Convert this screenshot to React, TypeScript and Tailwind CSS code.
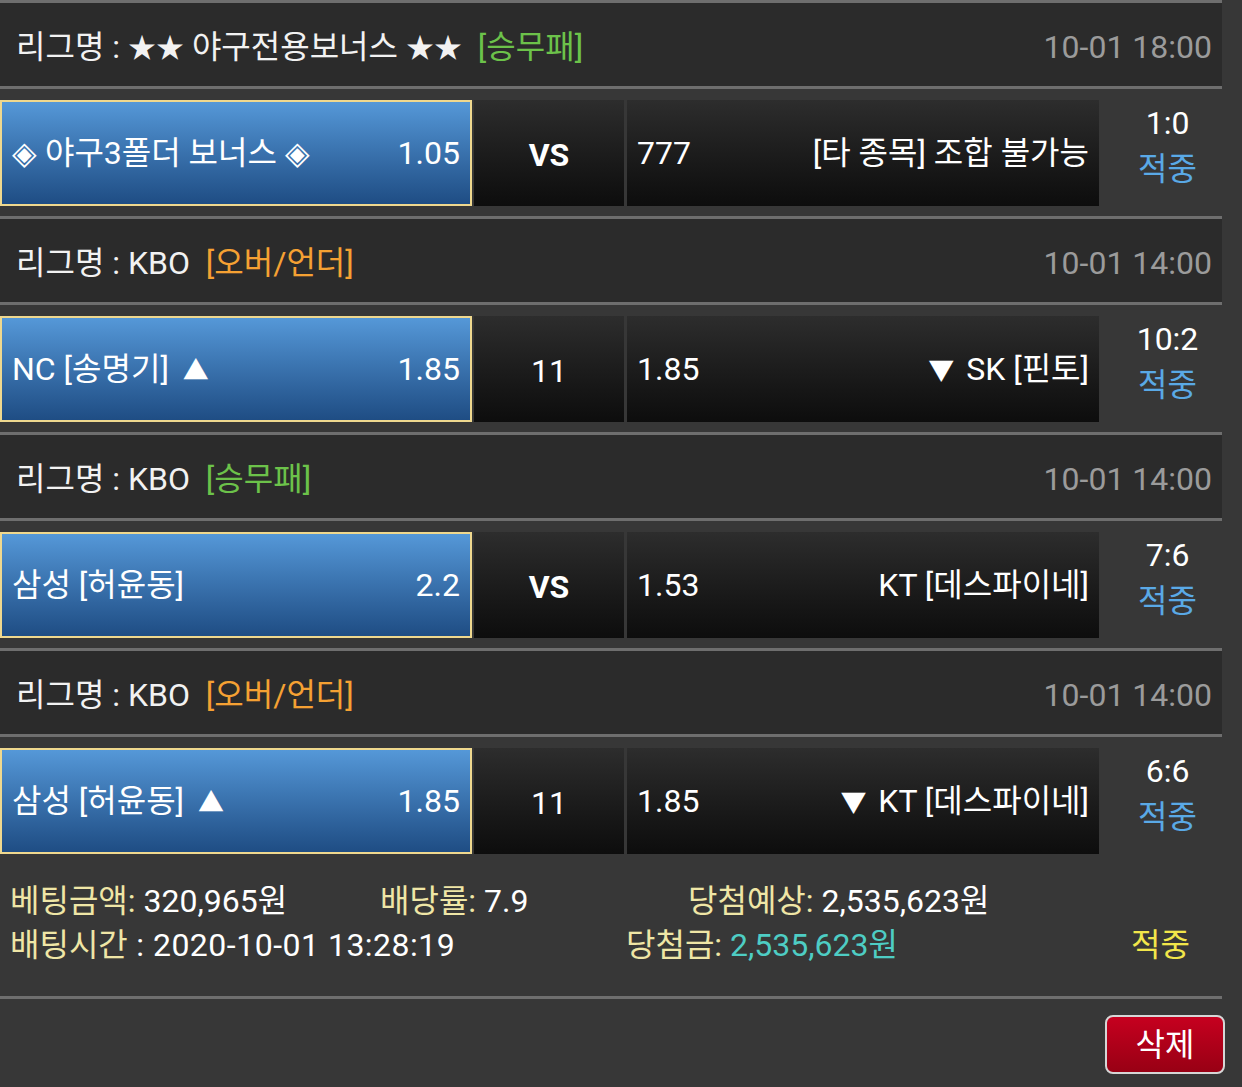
import React from "react";

type Block = {
  league: React.ReactNode;
  tag: string;
  tagColor: string;
  date: string;
  left: React.ReactNode;
  leftOdds: string;
  mid: string;
  midBold?: boolean;
  rightOdds: string;
  right: React.ReactNode;
  score: string;
};

const Up = () => <span className="ml-[6px] text-[26px]">▲</span>;
const Down = () => <span className="mr-[4px] text-[26px]">▼</span>;
const Stars = () => <span className="text-[28px]">★★</span>;

const blocks: Block[] = [
  {
    league: (
      <>
        <Stars /> 야구전용보너스 <Stars />
      </>
    ),
    tag: "[승무패]",
    tagColor: "text-[#6cc24a]",
    date: "10-01 18:00",
    left: "◈ 야구3폴더 보너스 ◈",
    leftOdds: "1.05",
    mid: "VS",
    midBold: true,
    rightOdds: "777",
    right: "[타 종목] 조합 불가능",
    score: "1:0",
  },
  {
    league: "KBO",
    tag: "[오버/언더]",
    tagColor: "text-[#f5a133]",
    date: "10-01 14:00",
    left: (
      <>
        NC [송명기] <Up />
      </>
    ),
    leftOdds: "1.85",
    mid: "11",
    rightOdds: "1.85",
    right: (
      <>
        <Down /> SK [핀토]
      </>
    ),
    score: "10:2",
  },
  {
    league: "KBO",
    tag: "[승무패]",
    tagColor: "text-[#6cc24a]",
    date: "10-01 14:00",
    left: "삼성 [허윤동]",
    leftOdds: "2.2",
    mid: "VS",
    midBold: true,
    rightOdds: "1.53",
    right: "KT [데스파이네]",
    score: "7:6",
  },
  {
    league: "KBO",
    tag: "[오버/언더]",
    tagColor: "text-[#f5a133]",
    date: "10-01 14:00",
    left: (
      <>
        삼성 [허윤동] <Up />
      </>
    ),
    leftOdds: "1.85",
    mid: "11",
    rightOdds: "1.85",
    right: (
      <>
        <Down /> KT [데스파이네]
      </>
    ),
    score: "6:6",
  },
];

function BlockView({ b }: { b: Block }) {
  return (
    <div>
      <div className="h-[3px] bg-[#6e6e6e]" />
      <div className="flex h-[83px] items-center justify-between bg-[#2b2b2b] pl-[16px] pr-[10px] pt-[5px]">
        <span className="whitespace-pre text-[#f2f2f2]">
          {"리그명 : "}
          {b.league}
          {"  "}
          <span className={b.tagColor}>{b.tag}</span>
        </span>
        <span className="text-[#9b9b9b]">{b.date}</span>
      </div>
      <div className="h-[3px] bg-[#6e6e6e]" />
      <div className="h-[11px]" />
      <div className="flex h-[106px]">
        <div className="flex w-[472px] items-center justify-between border-2 border-[#efd88e] bg-gradient-to-b from-[#5598d8] to-[#1f4d84] pl-[10px] pr-[10px] text-white">
          <span className="whitespace-pre">{b.left}</span>
          <span>{b.leftOdds}</span>
        </div>
        <div
          className={
            "ml-[2px] flex w-[150px] items-center justify-center bg-gradient-to-b from-[#2d2d2d] to-[#0d0d0d] pt-[4px] text-white " +
            (b.midBold ? "font-bold" : "")
          }
        >
          {b.mid}
        </div>
        <div className="ml-[3px] flex w-[472px] items-center justify-between bg-gradient-to-b from-[#2d2d2d] to-[#0d0d0d] pl-[10px] pr-[10px] text-white">
          <span>{b.rightOdds}</span>
          <span className="whitespace-pre">{b.right}</span>
        </div>
        <div className="flex flex-1 flex-col items-center pl-[14px] leading-[46px]">
          <span className="text-white">{b.score}</span>
          <span className="text-[#5aa9e6]">적중</span>
        </div>
      </div>
      <div className="h-[10px]" />
    </div>
  );
}

export default function App() {
  return (
    <div className="min-h-[1087px] w-full bg-[#373737] font-['Roboto','Noto_Sans_CJK_KR',sans-serif] text-[32px] leading-none">
      <div className="w-[1222px]">
        {blocks.map((b, i) => (
          <BlockView key={i} b={b} />
        ))}
        <div className="pb-[29px] pt-[15px] leading-[44px]">
          <div className="flex pl-[10px]">
            <span className="w-[370px] whitespace-pre">
              <span className="text-[#efe6a6]">베팅금액:</span>
              <span className="text-white"> 320,965원</span>
            </span>
            <span className="w-[308px] whitespace-pre">
              <span className="text-[#efe6a6]">배당률:</span>
              <span className="text-white"> 7.9</span>
            </span>
            <span className="whitespace-pre">
              <span className="text-[#efe6a6]">당첨예상:</span>
              <span className="text-white"> 2,535,623원</span>
            </span>
          </div>
          <div className="flex pl-[10px]">
            <span className="w-[616px] whitespace-pre">
              <span className="text-[#efe6a6]">배팅시간</span>
              <span className="text-white tracking-[0.5px]"> : 2020-10-01 13:28:19</span>
            </span>
            <span className="w-[505px] whitespace-pre">
              <span className="text-[#efe6a6]">당첨금:</span>
              <span className="text-[#4ecdc4]"> 2,535,623원</span>
            </span>
            <span className="text-[#f2e64a]">적중</span>
          </div>
        </div>
        <div className="h-[3px] bg-[#6e6e6e]" />
      </div>
      <div className="flex justify-end pr-[17px] pt-[16px]">
        <div className="flex h-[59px] w-[120px] items-center justify-center rounded-[8px] border-2 border-[#d6d6d6] bg-gradient-to-b from-[#c6001f] to-[#980014] text-white">
          삭제
        </div>
      </div>
    </div>
  );
}
